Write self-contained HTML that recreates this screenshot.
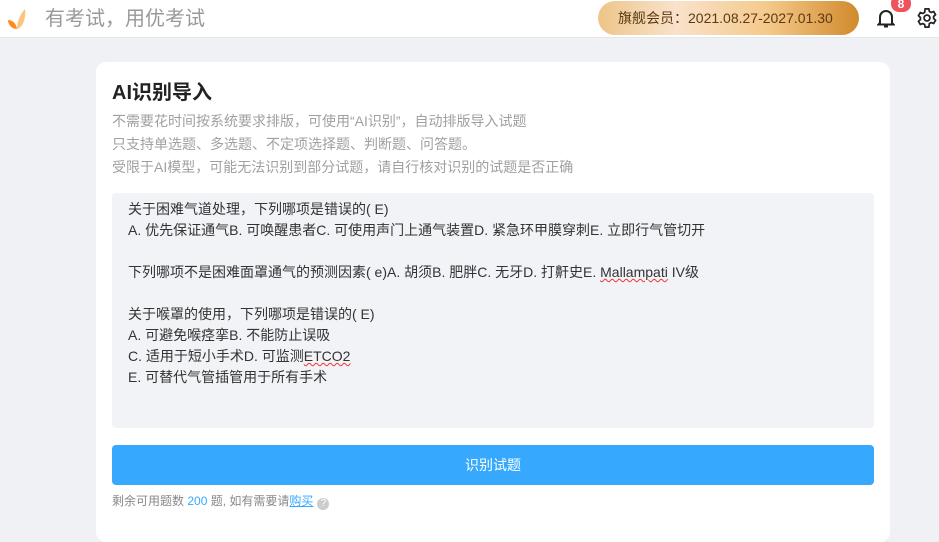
<!DOCTYPE html>
<html><head><meta charset="utf-8"><style>
body{margin:0;width:939px;height:521px;overflow:hidden;background:#f0f1f5;font-family:"Liberation Sans","Noto Sans CJK SC",sans-serif;position:relative}
.hdr{position:absolute;left:0;top:0;width:939px;height:37px;background:#fff;border-bottom:1px solid #e6e7eb}
.logo{position:absolute;left:7px;top:8px}
.slogan{position:absolute;left:45px;top:7px;font-size:20px;color:#999;line-height:24px}
.vip{position:absolute;left:598px;top:1px;width:261px;height:34px;border-radius:17px;background:linear-gradient(90deg,#edc58a 0%,#f9e2cb 30%,#f5c98a 65%,#d08a2c 100%);font-size:14px;color:#5a3a14;line-height:34px;padding-left:20px;box-sizing:border-box}
.bell{position:absolute;left:877px;top:8px}
.badge{position:absolute;left:891px;top:-5px;width:20px;height:17px;border-radius:8px;background:#f0525b;color:#fff;font-size:12px;font-weight:bold;text-align:center;line-height:19px}
.gear{position:absolute;left:916px;top:7px}
.card{position:absolute;left:96px;top:62px;width:794px;height:480px;background:#fff;border-radius:10px}
h1{position:absolute;left:16px;top:18px;margin:0;font-size:20px;font-weight:bold;color:#222;line-height:26px}
.desc{position:absolute;left:16px;top:48px;font-size:14px;color:#a0a0a0;line-height:23px}
.ta{position:absolute;left:16px;top:131px;width:762px;height:235px;background:#f2f3f7;border-radius:4px;box-sizing:border-box;padding:6px 16px;font-size:14px;color:#333;line-height:21px;white-space:pre}
.sq{text-decoration:underline wavy #e33;text-decoration-thickness:1px}
.btn{position:absolute;left:16px;top:383px;width:762px;height:40px;background:#36a9fe;border-radius:4px;color:#fff;font-size:14px;text-align:center;line-height:40px}
.foot{position:absolute;left:16px;top:431px;font-size:12px;color:#888;line-height:16px}
.foot b{color:#36a9fe;font-weight:normal}
.foot a{color:#36a9fe;text-decoration:underline}
.q{display:inline-block;width:12px;height:12px;border-radius:6px;background:#ccc;color:#fff;font-size:10px;text-align:center;line-height:12px;vertical-align:-1px;margin-left:4px}
</style></head><body>
<div class="hdr">
<svg class="logo" width="20" height="22" viewBox="0 0 20 22"><path d="M10 21C4 21 1 16 1 12 4 12 9 14 10 21Z" fill="#ff8a1e"/><path d="M10 21C10 14 13 6 18 1 19 8 17 19 10 21Z" fill="#ffc380"/></svg>
<div class="slogan">有考试，用优考试</div>
<div class="vip">旗舰会员：2021.08.27-2027.01.30</div>
<svg class="bell" width="18" height="20" viewBox="0 0 18 20" fill="none" stroke="#222" stroke-width="2"><path d="M3 15V9a6 6 0 0 1 12 0v6l1.5 1.5h-15Z"/><path d="M7 18.5h4"/></svg>
<div class="badge">8</div>
<svg class="gear" width="22" height="22" viewBox="0 0 24 24" fill="none" stroke="#222" stroke-width="1.9"><circle cx="12" cy="12" r="3.2"/><path d="M10 2h4l.6 2.8 2 1.1 2.7-.9 2 3.4-2.1 1.9v2.3l2.1 1.9-2 3.4-2.7-.9-2 1.1L14 22h-4l-.6-2.8-2-1.1-2.7.9-2-3.4 2.1-1.9V11.4L2.7 9.5l2-3.4 2.7.9 2-1.1Z"/></svg>
</div>
<div class="card">
<h1>AI识别导入</h1>
<div class="desc">不需要花时间按系统要求排版，可使用“AI识别”，自动排版导入试题<br>只支持单选题、多选题、不定项选择题、判断题、问答题。<br>受限于AI模型，可能无法识别到部分试题，请自行核对识别的试题是否正确</div>
<div class="ta">关于困难气道处理，下列哪项是错误的( E)
A. 优先保证通气B. 可唤醒患者C. 可使用声门上通气装置D. 紧急环甲膜穿刺E. 立即行气管切开

下列哪项不是困难面罩通气的预测因素( e)A. 胡须B. 肥胖C. 无牙D. 打鼾史E. <span class="sq">Mallampati</span> IV级

关于喉罩的使用，下列哪项是错误的( E)
A. 可避免喉痉挛B. 不能防止误吸
C. 适用于短小手术D. 可监测<span class="sq">ETCO2</span>
E. 可替代气管插管用于所有手术</div>
<div class="btn">识别试题</div>
<div class="foot">剩余可用题数 <b>200</b> 题, 如有需要请<a>购买</a><span class="q">?</span></div>
</div>
</body></html>
